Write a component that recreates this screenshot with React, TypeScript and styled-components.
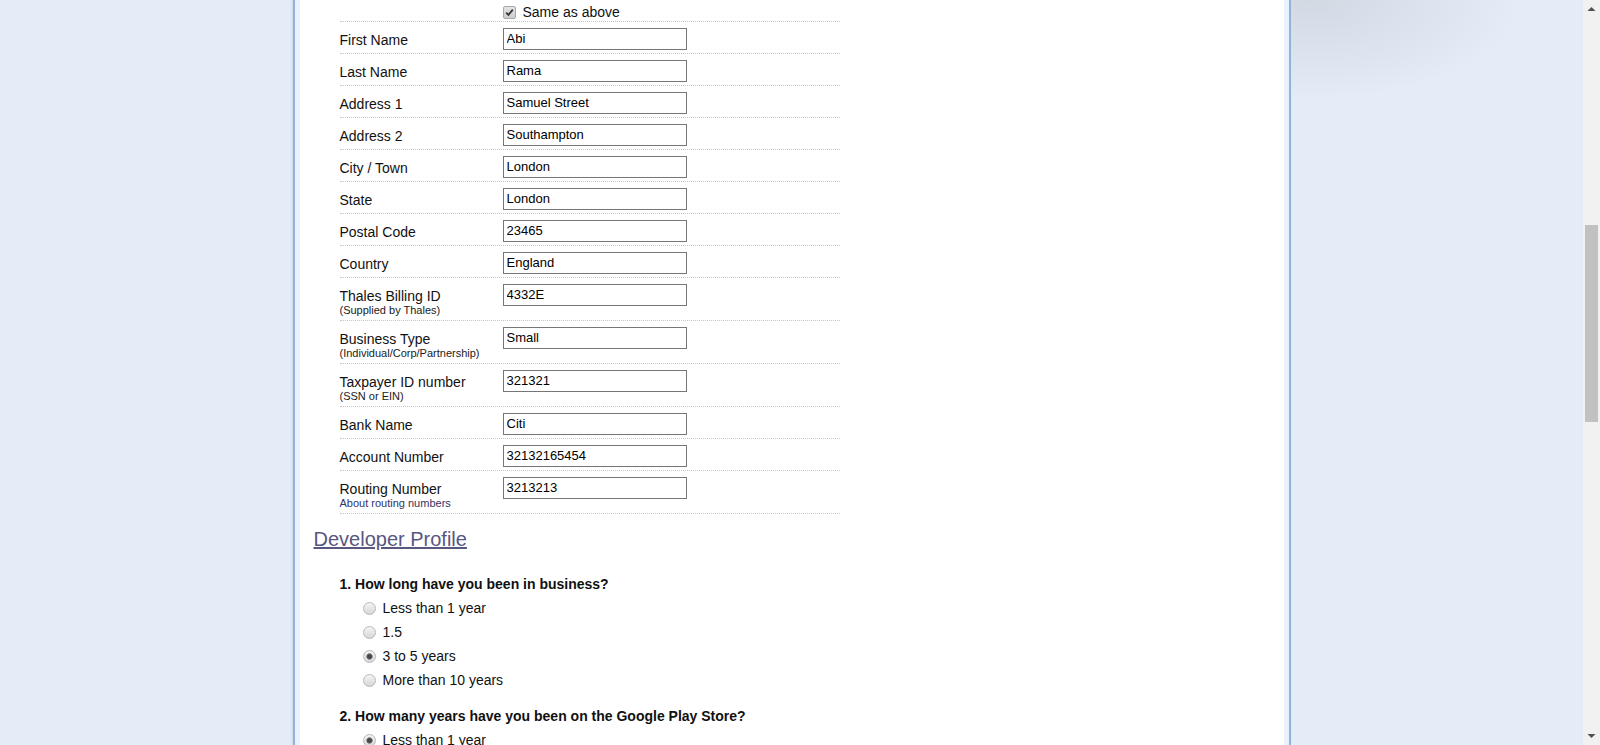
import React from "react";
import styled, { createGlobalStyle } from "styled-components";

const GlobalStyle = createGlobalStyle`
  html, body { margin: 0; padding: 0; }
  body {
    font-family: "Liberation Sans", Arial, sans-serif;
    background: #e3ecf7;
    overflow: hidden;
    color: #111;
  }
`;

const Viewport = styled.div`
  display: flex;
  width: 1600px;
  height: 745px;
  overflow: hidden;
`;

const Stage = styled.div`
  flex: 1;
  display: flex;
  justify-content: center;
  overflow: hidden;
  background:
    radial-gradient(ellipse 210px 100px at 1310px 0px, rgba(170, 172, 180, 0.3), rgba(170, 172, 180, 0) 100%),
    #e3ecf7;
`;

const Frame = styled.div`
  flex-shrink: 0;
  width: 984px;
  height: 100%;
  padding: 0 5px;
  border-left: 2px solid #93b3d8;
  border-right: 2px solid #93b3d8;
  background: #e9f1fb;
  box-shadow: -1px 0 2px rgba(120, 130, 150, 0.2);
`;

const Sheet = styled.div`
  height: 100%;
  background: #ffffff;
`;

const FormTable = styled.div`
  margin-left: 40px;
  width: 500px;
`;

const Row = styled.div`
  display: grid;
  grid-template-columns: 163px 1fr;
  align-items: start;
  padding: 6px 0 3px;
  border-bottom: 1px dotted #c6c6c6;
`;

const TopRow = styled(Row)`
  padding: 4px 0 1px;
`;

const LabelCell = styled.div`
  padding-top: 4px;
  font-size: 14px;
  line-height: 16px;
  color: #111;
`;

const SubLabel = styled.div`
  font-size: 11px;
  line-height: 13px;
  color: #1a1a1a;
`;

const SubLink = styled.a`
  display: block;
  font-size: 11px;
  line-height: 13px;
  color: #333366;
  text-decoration: none;
  cursor: pointer;
`;

const TextField = styled.input`
  box-sizing: border-box;
  width: 184px;
  height: 22px;
  margin: 0;
  padding: 2px 3px 3px;
  border: 1px solid #767676;
  border-radius: 0;
  background: #fff;
  font-family: "Liberation Sans", Arial, sans-serif;
  font-size: 13px;
  line-height: 15px;
  color: #000;
  outline: none;
`;

const CheckLabel = styled.label`
  display: flex;
  align-items: center;
  gap: 7px;
  font-size: 14px;
  line-height: 16px;
  color: #111;
`;

const CheckBox = styled.span`
  display: inline-flex;
  width: 13px;
  height: 13px;
  box-sizing: border-box;
  border: 1px solid #a8a8a8;
  border-radius: 2px;
  background: linear-gradient(#e4e4e4, #cdcdcd);
  svg { display: block; }
`;

const Heading = styled.a`
  display: inline-block;
  margin: 14px 0 0 14px;
  font-size: 20px;
  line-height: 23px;
  color: #57577f;
  text-decoration: underline;
  cursor: pointer;
`;

const Questions = styled.div`
  margin: 25px 0 0 40px;
`;

const QuestionBlock = styled.div`
  & + & {
    margin-top: 16px;
  }
`;

const QuestionTitle = styled.div`
  margin-bottom: 4px;
  font-size: 14px;
  line-height: 16px;
  font-weight: bold;
  color: #111;
`;

const OptionList = styled.div`
  padding-left: 23px;
`;

const Option = styled.label`
  display: flex;
  align-items: center;
  gap: 7px;
  height: 24px;
  font-size: 14px;
  color: #111;
`;

const Radio = styled.input.attrs({ type: "radio" })`
  appearance: none;
  -webkit-appearance: none;
  box-sizing: border-box;
  width: 13px;
  height: 13px;
  margin: 0;
  border-radius: 50%;
  border: 1px solid #b8b8b8;
  background: linear-gradient(#f4f4f4, #d8d8d8);
  &:checked {
    background:
      radial-gradient(circle, #444 0, #4a4a4a 2px, #7d7d7d 2.8px, rgba(125, 125, 125, 0) 3.6px),
      linear-gradient(#f4f4f4, #d8d8d8);
  }
`;

const ScrollBar = styled.div`
  width: 17px;
  display: flex;
  flex-direction: column;
  background: #f1f1f1;
`;

const ScrollButton = styled.div`
  height: 17px;
  flex-shrink: 0;
  svg { display: block; }
`;

const Track = styled.div`
  flex: 1;
  padding: 0 2px;
`;

const Thumb = styled.div`
  height: 197px;
  background: #c1c1c1;
`;

type Field = { label: string; sub?: string; link?: string; value: string };

const fields: Field[] = [
  { label: "First Name", value: "Abi" },
  { label: "Last Name", value: "Rama" },
  { label: "Address 1", value: "Samuel Street" },
  { label: "Address 2", value: "Southampton" },
  { label: "City / Town", value: "London" },
  { label: "State", value: "London" },
  { label: "Postal Code", value: "23465" },
  { label: "Country", value: "England" },
  { label: "Thales Billing ID", sub: "(Supplied by Thales)", value: "4332E" },
  { label: "Business Type", sub: "(Individual/Corp/Partnership)", value: "Small" },
  { label: "Taxpayer ID number", sub: "(SSN or EIN)", value: "321321" },
  { label: "Bank Name", value: "Citi" },
  { label: "Account Number", value: "32132165454" },
  { label: "Routing Number", link: "About routing numbers", value: "3213213" },
];

type Question = { title: string; name: string; options: string[]; selected: number };

const questions: Question[] = [
  {
    title: "1. How long have you been in business?",
    name: "q1",
    options: ["Less than 1 year", "1.5", "3 to 5 years", "More than 10 years"],
    selected: 2,
  },
  {
    title: "2. How many years have you been on the Google Play Store?",
    name: "q2",
    options: ["Less than 1 year", "1 to 2 years", "3 to 5 years"],
    selected: 0,
  },
];

export default function App() {
  return (
    <>
      <GlobalStyle />
      <Viewport>
        <Stage>
          <Frame>
            <Sheet>
              <FormTable>
                <TopRow>
                  <div />
                  <CheckLabel>
                    <CheckBox>
                      <svg width="11" height="11" viewBox="0 0 11 11">
                        <path d="M2.2 5.6 L4.4 7.9 L8.8 2.6" stroke="#3a3a3a" strokeWidth="1.9" fill="none" />
                      </svg>
                    </CheckBox>
                    Same as above
                  </CheckLabel>
                </TopRow>
                {fields.map((f) => (
                  <Row key={f.label}>
                    <LabelCell>
                      {f.label}
                      {f.sub && <SubLabel>{f.sub}</SubLabel>}
                      {f.link && <SubLink>{f.link}</SubLink>}
                    </LabelCell>
                    <div>
                      <TextField defaultValue={f.value} />
                    </div>
                  </Row>
                ))}
              </FormTable>
              <Heading>Developer Profile</Heading>
              <Questions>
                {questions.map((q) => (
                  <QuestionBlock key={q.name}>
                    <QuestionTitle>{q.title}</QuestionTitle>
                    <OptionList>
                      {q.options.map((o, i) => (
                        <Option key={o}>
                          <Radio name={q.name} defaultChecked={i === q.selected} />
                          {o}
                        </Option>
                      ))}
                    </OptionList>
                  </QuestionBlock>
                ))}
              </Questions>
            </Sheet>
          </Frame>
        </Stage>
        <ScrollBar>
          <ScrollButton>
            <svg width="17" height="17" viewBox="0 0 17 17">
              <polygon points="4.5,11 12.5,11 8.5,7" fill="#505050" />
            </svg>
          </ScrollButton>
          <Track>
            <Thumb style={{ marginTop: 208 }} />
          </Track>
          <ScrollButton>
            <svg width="17" height="17" viewBox="0 0 17 17">
              <polygon points="4.5,6 12.5,6 8.5,10" fill="#505050" />
            </svg>
          </ScrollButton>
        </ScrollBar>
      </Viewport>
    </>
  );
}
